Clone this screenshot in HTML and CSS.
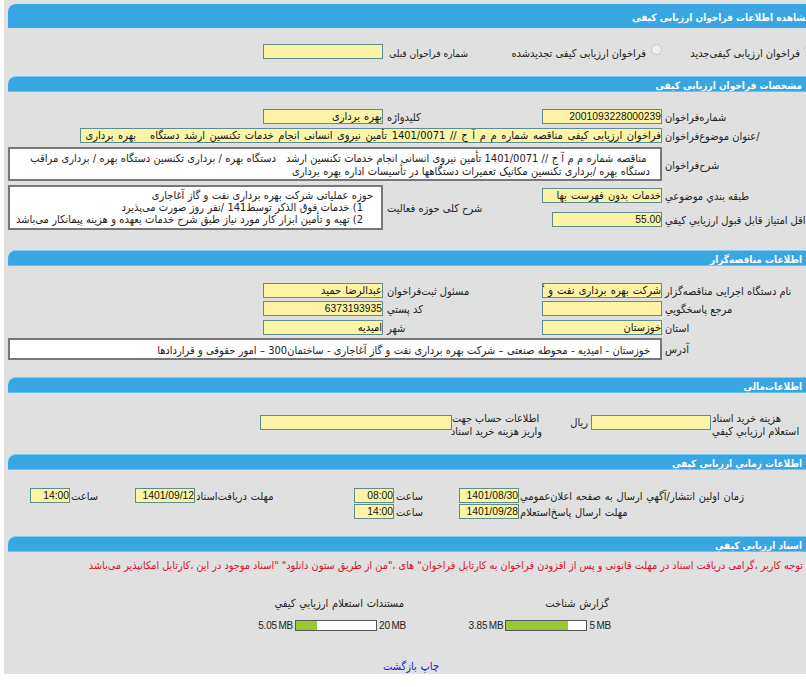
FILE: index.html
```html
<!DOCTYPE html>
<html lang="fa" dir="rtl">
<head>
    <meta charset="UTF-8">
    <title>مشاهده اطلاعات فراخوان ارزیابی کیفی</title>
    <link rel="stylesheet" href="styles.css">
</head>
<body>
<div class="panel">

    <div class="bar bar-main">مشاهده اطلاعات فراخوان ارزیابی کیفی</div>
    <div class="type-row">
        <input type="radio" class="radio radio-cut" disabled>
        <span class="type-new">فراخوان ارزیابی کیفی‌جدید</span>
        <input type="radio" class="radio" disabled>
        <span class="type-renew">فراخوان ارزیابی کیفی تجدیدشده</span>
        <span class="type-prev">شماره فراخوان قبلی</span>
        <div class="field"></div>
    </div>

    <div class="bar">مشخصات فراخوان ارزیابی کیفی</div>
    <div class="form form-spec">
        <label>شماره‌فراخوان</label>
        <div class="field ltr">2001093228000239</div>
        <label class="l2">کلیدواژه</label>
        <div class="field">بهره برداری</div>

        <label>/عنوان موضوع‌فراخوان</label>
        <div class="field f-wide">فراخوان ارزیابی کیفی مناقصه شماره م م آ ج // 1401/0071 تأمین نیروی انسانی انجام خدمات تکنسین ارشد دستگاه &nbsp; بهره برداری</div>

        <label>شرح‌فراخوان</label>
        <div class="box f-desc">&nbsp;مناقصه شماره م م آ ج // 1401/0071 تأمین نیروی انسانی انجام خدمات تکنسین ارشد &nbsp; دستگاه بهره / برداری تکنسین دستگاه بهره / برداری مراقب<br>دستگاه بهره /برداری تکنسین مکانیک تعمیرات دستگاهها در تأسیسات اداره بهره برداری</div>

        <label>طبقه بندي موضوعي</label>
        <div class="field">خدمات بدون فهرست بها</div>
        <label class="l2 activity-label">شرح کلی حوزه فعالیت</label>
        <div class="box activity">حوزه عملیاتی شرکت بهره برداری نفت و گاز آغاجاری<br>&nbsp; &nbsp;1) خدمات فوق الذکر توسط141 /نفر روز صورت می‌پذیرد<br>&nbsp; &nbsp;2) تهیه و تأمین ابزار کار مورد نیاز طبق شرح خدمات بعهده و هزینه پیمانکار می‌باشد</div>

        <label>حداقل امتیاز قابل قبول ارزیابي کیفي</label>
        <div class="field f110 ltr">55.00</div>
    </div>

    <div class="bar">اطلاعات مناقصه‌گزار</div>
    <div class="form form-owner">
        <label>نام دستگاه اجرایی مناقصه‌گزار</label>
        <div class="field">شرکت بهره برداری نفت و گاز آغاجاری</div>
        <label class="l2">مسئول ثبت‌فراخوان</label>
        <div class="field">عبدالرضا حمید</div>

        <label>مرجع پاسخگویي</label>
        <div class="field"></div>
        <label class="l2">کد پستي</label>
        <div class="field ltr">6373193935</div>

        <label>استان</label>
        <div class="field">خوزستان</div>
        <label class="l2">شهر</label>
        <div class="field">امیدیه</div>

        <label>آدرس</label>
        <div class="box f-address">خوزستان - امیدیه - محوطه صنعتی – شرکت بهره برداری نفت و گاز آغاجاری - ساختمان300 – امور حقوقی و قراردادها</div>
    </div>

    <div class="bar">اطلاعات‌مالي</div>
    <div class="money-row">
        <span class="money-label">هزینه خرید اسناد<br>استعلام ارزیابي کیفي</span>
        <div class="field"></div>
        <span class="money-unit">ریال</span>
        <span class="money-account">اطلاعات حساب جهت<br>واریز هزینه خرید اسناد</span>
        <div class="field f192"></div>
    </div>

    <div class="bar">اطلاعات زماني ارزیابي کیفي</div>
    <div class="times">
        <div class="time-row">
            <span class="t-first">زمان اولین انتشار/آگهي ارسال به صفحه اعلان‌عمومي</span>
            <div class="field f60 ltr">1401/08/30</div>
            <span class="t-hour">ساعت</span>
            <div class="field f40 ltr">08:00</div>
            <span class="t-deadline">مهلت دریافت‌اسناد</span>
            <div class="field f60 ltr">1401/09/12</div>
            <span class="t-hour t-hour2">ساعت</span>
            <div class="field f40 ltr">14:00</div>
        </div>
        <div class="time-row">
            <span class="t-first">مهلت ارسال پاسخ‌استعلام</span>
            <div class="field f60 ltr">1401/09/28</div>
            <span class="t-hour">ساعت</span>
            <div class="field f40 ltr">14:00</div>
        </div>
    </div>

    <div class="bar">اسناد ارزیابي کیفي</div>
    <div class="notice">توجه کاربر ،گرامی دریافت اسناد در مهلت قانونی و پس از افزودن فراخوان به کارتابل فراخوان" های ،"من از طریق ستون دانلود" "اسناد موجود در این ،کارتابل امکانپذیر می‌باشد</div>

    <div class="docs">
        <div class="doc doc-report">
            <div class="doc-title">گزارش شناخت</div>
            <div class="quota">
                <span class="ltr">5 MB</span>
                <div class="meter"><div class="meter-fill" style="width: 77%"></div></div>
                <span class="ltr">3.85 MB</span>
            </div>
        </div>
        <div class="doc doc-files">
            <div class="doc-title">مستندات استعلام ارزیابي کیفي</div>
            <div class="quota">
                <span class="ltr">20 MB</span>
                <div class="meter"><div class="meter-fill" style="width: 26%"></div></div>
                <span class="ltr">5.05 MB</span>
            </div>
        </div>
    </div>

    <div class="links"><a href="#">چاپ</a> <a href="#">بازگشت</a></div>
</div>
</body>
</html>
```

FILE: styles.css
```css
html, body {
    margin: 0;
    padding: 0;
    background-color: #ffffff;
    overflow: hidden;
}
body {
    font-family: "DejaVu Sans Condensed", "DejaVu Sans", sans-serif;
    font-size: 11px;
    word-spacing: 0.6px;
    color: #222222;
}
.panel {
    margin-left: 4px;
    width: 802px;
    height: 674px;
    padding-top: 4px;
    box-sizing: border-box;
    background-color: #e0e0e0;
}
.bar {
    margin-left: 4px;
    height: 16px;
    line-height: 17px;
    padding-right: 4px;
    box-sizing: border-box;
    color: #ffffff;
    font-weight: bold;
    font-size: 10px;
    word-spacing: 0;
    background-color: #38a6e3;
    border-top: 1px solid #7ccbf2;
    border-bottom: 1px solid #6cc0ec;
    border-top-left-radius: 8px;
    white-space: nowrap;
}
.bar-main {
    height: 24px;
    line-height: 28px;
    padding-right: 0;
    margin-right: -5px;
    border: none;
    border-top-left-radius: 8px;
}
.ltr {
    direction: ltr;
    font-family: "Liberation Sans", sans-serif;
    font-size: 10.3px;
    word-spacing: 0;
    white-space: nowrap;
}

.field {
    width: 120px;
    height: 15px;
    line-height: 13px;
    box-sizing: border-box;
    background-color: #fbf4a6;
    border: 1px solid #5f8c8e;
    color: #111111;
    word-spacing: 1px;
    white-space: nowrap;
    overflow: hidden;
    text-align: right;
    flex: none;
}
.f110 { width: 110px; }
.f192 { width: 192px; }
.f60 { width: 60px; }
.f40 { width: 40px; }
.box {
    background-color: #ffffff;
    border: 2px solid #777777;
    box-sizing: border-box;
    line-height: 13px;
    word-spacing: 0.2px;
}

.type-row {
    display: flex;
    align-items: center;
    height: 15px;
    margin: 16px 0 17px;
}
.type-row span { flex: none; padding-top: 3px; white-space: nowrap; word-spacing: 0; }
.radio {
    margin: -4px 0 0 5px;
    width: 11px;
    height: 11px;
    flex: none;
}
.radio-cut { margin-right: -9px; margin-left: 4px; }
.type-new { width: 138px; }
.type-renew { width: 178px; }
.type-row .type-prev { width: 85px; font-size: 10px; }

.form {
    display: grid;
    grid-template-columns: 144px 120px 71px 88px 120px 1fr;
    grid-auto-rows: min-content;
    row-gap: 4px;
    align-items: center;
}
.form label {
    grid-column: 1;
    justify-self: end;
    padding: 3px 0 0 3px;
    line-height: 12px;
    word-spacing: 0;
    white-space: nowrap;
}
.form .l2 { grid-column: 4; padding-left: 4px; }
.form-spec { margin: 17px 0 20px; }
.form-owner { margin: 17px 0 17px; row-gap: 3.3px; }
.f-wide {
    grid-column: 2 / span 5;
    width: 582px;
    word-spacing: 1.5px;
}
.f-desc {
    grid-column: 2 / span 5;
    width: 654px;
    height: 34px;
    padding: 3px 10px 0 0;
    white-space: nowrap;
}
.form .activity-label {
    grid-row: 4 / span 2;
}
.activity {
    grid-column: 5 / span 2;
    grid-row: 4 / span 2;
    width: 375px;
    height: 45px;
    padding: 3px 8px 0 0;
    line-height: 12px;
    white-space: nowrap;
}
.f-address {
    grid-column: 2 / span 5;
    width: 654px;
    height: 22px;
    line-height: 18px;
    padding: 2px 10px 0 0;
    white-space: nowrap;
}

.money-row {
    display: flex;
    align-items: center;
    height: 30px;
    margin: 15px 0 16px;
    line-height: 13px;
}
.money-row span { flex: none; white-space: nowrap; box-sizing: border-box; word-spacing: 0; }
.money-label { width: 95px; padding: 4px 0 0 1px; text-align: left; }
.money-unit { width: 49px; padding-right: 3px; }
.money-row .money-account { width: 90px; padding-top: 4px; font-size: 10.8px; text-align: left; }

.times { margin: 18px 0 17px; }
.time-row {
    display: flex;
    align-items: center;
    height: 15px;
    margin-bottom: 1px;
}
.time-row span { flex: none; padding-top: 2px; white-space: nowrap; box-sizing: border-box; }
.t-first { width: 287px; padding-left: 1px; text-align: left; }
.t-hour { width: 65px; padding-right: 36px; }
.t-deadline { width: 159px; padding-left: 1px; text-align: left; }
.t-hour2 { padding-right: 37px; }

.notice {
    margin: 7px 3px 0 0;
    height: 14px;
    line-height: 14px;
    font-size: 10.8px;
    word-spacing: 0;
    color: #d8102c;
    white-space: nowrap;
}
.docs {
    display: flex;
    margin-top: 24px;
}
.doc { flex: none; }
.doc-report { width: 145px; margin-right: 195px; }
.doc-files { width: 150px; margin-right: 60px; }
.doc-title {
    height: 14px;
    line-height: 14px;
    padding-right: 2px;
    white-space: nowrap;
}
.quota {
    display: flex;
    align-items: center;
    gap: 2px;
    margin-top: 8px;
    height: 14px;
}
.quota .ltr {
    font-size: 10px;
    letter-spacing: -0.2px;
    word-spacing: -1px;
}
.meter {
    width: 82px;
    height: 11px;
    box-sizing: border-box;
    direction: ltr;
    background-color: #ffffff;
    border: 1px solid #555555;
    flex: none;
}
.meter-fill {
    height: 100%;
    background-color: #9ac733;
}
.links {
    margin-top: 27px;
    height: 14px;
    line-height: 14px;
    padding-right: 367px;
}
.links a {
    color: #2222cc;
    text-decoration: none;
}
```
